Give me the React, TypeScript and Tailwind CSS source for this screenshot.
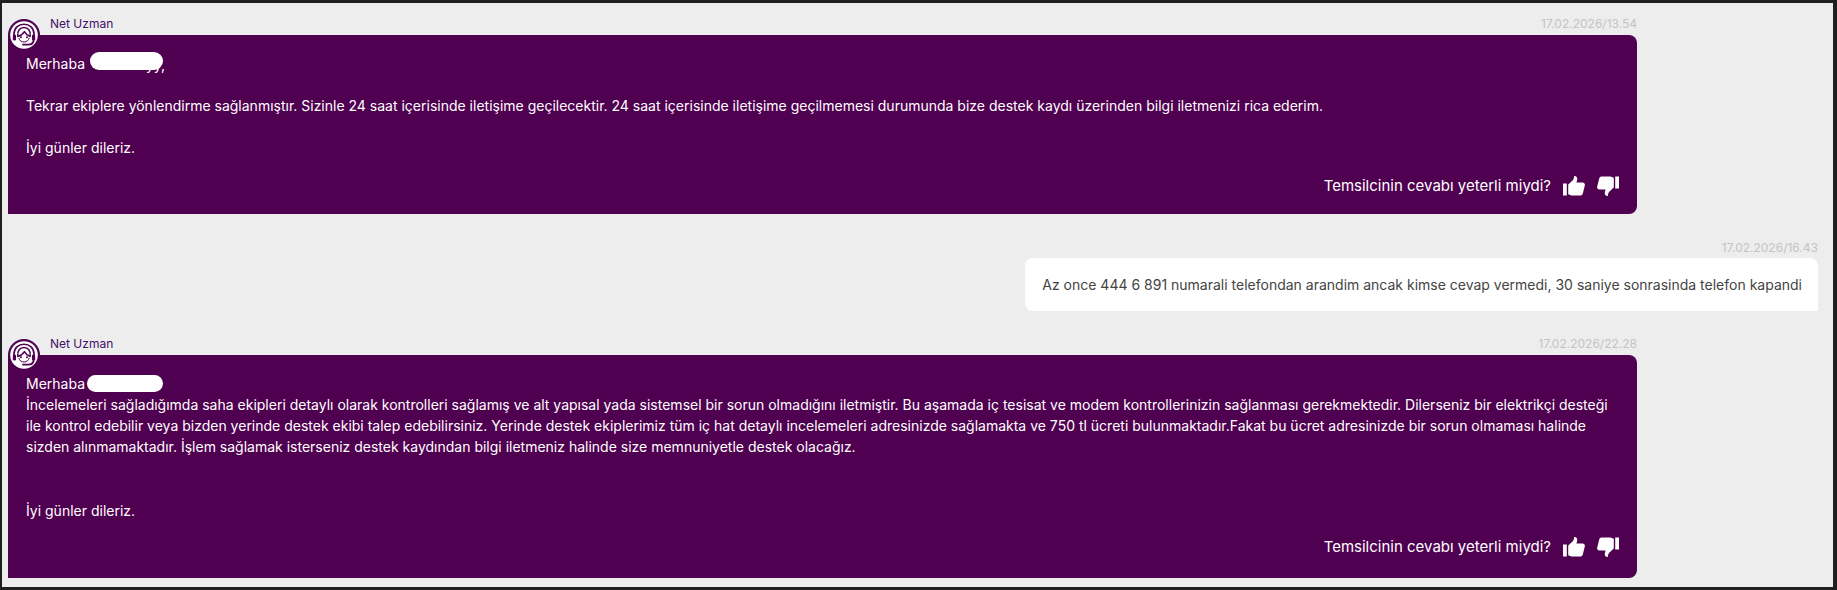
const INTER = "font-['Inter','Liberation_Sans',sans-serif]";

function Avatar() {
  return (
    <div className="absolute left-0 top-[1px] w-8 h-8">
      <svg viewBox="0 0 32 32" className="w-8 h-8">
        <circle cx="16" cy="16" r="16" fill="#4f0050" />
        <circle cx="16" cy="16" r="13.8" fill="#fff" />
        <path d="M6 20 V15 C6 9 10.5 5.2 16 5.2 C21.5 5.2 26 9 26 15 V20" fill="none" stroke="#4f0050" strokeWidth="1.6" />
        <path d="M9.8 17.5 C9 11.5 12 8.5 16 8.5 C20 8.5 23 11.5 22.2 17.5 C19.8 16.5 17.6 15 16.4 12.6 C15 15 12.4 16.8 9.8 17.5 Z" fill="none" stroke="#4f0050" strokeWidth="1.5" strokeLinejoin="round" />
        <path d="M10.8 19 C11.6 21.6 13.4 23 16 23 C18.6 23 20.4 21.6 21.2 19" fill="none" stroke="#4f0050" strokeWidth="1" />
        <circle cx="13" cy="18.2" r="1" fill="#4f0050" />
        <circle cx="19" cy="18.2" r="1" fill="#4f0050" />
        <rect x="4.8" y="15.5" width="3.2" height="6" rx="1.3" fill="#4f0050" />
        <rect x="24" y="15.5" width="3.2" height="6" rx="1.3" fill="#4f0050" />
        <path d="M25.6 21 C25.6 24.2 23 25.6 20 25.6 H15" fill="none" stroke="#4f0050" strokeWidth="1.8" strokeLinecap="round" />
      </svg>
    </div>
  );
}

function Thumb({ className }: { className?: string }) {
  return (
    <svg viewBox="0 0 22 20" className={`w-[22px] h-5 ${className ?? ""}`} fill="#fff">
      <rect x="0" y="7.5" width="3.8" height="12" />
      <path d="M5.2 8.5 L9.8 4.2 C10.8 3 11 1.5 11.2 0 C13.6 -0.2 14.8 2 14 4.5 L13.4 6.5 H19.6 C21.4 6.5 22.2 8 21.8 9.5 L19.8 17.6 C19.4 19 18.4 19.6 17 19.6 H8.5 L5.2 18.2 Z" />
    </svg>
  );
}

function Blob({ className }: { className: string }) {
  return <div className={`absolute bg-white rounded-full ${className}`} />;
}

function Feedback() {
  return (
    <div className="flex items-center justify-end gap-3 text-[15px] leading-5 text-white pr-[18px]">
      <span>Temsilcinin cevabı yeterli miydi?</span>
      <div className="flex items-center gap-3">
        <Thumb />
        <Thumb className="rotate-180" />
      </div>
    </div>
  );
}

function AgentMessage({ time, children }: { time: string; children: React.ReactNode }) {
  return (
    <div className="relative w-[1629px] ml-[6px]">
      <Avatar />
      <div className="flex justify-between h-[17px] pl-[42px] text-[12px] leading-[12px]">
        <span className="text-[#431067]">Net Uzman</span>
        <span className="text-[#c4c4c4]">{time}</span>
      </div>
      <div className="bg-[#4f0050] rounded-r-lg text-white text-[14px] leading-[21px] pl-[18px] pt-[18px] pb-[18px]">
        {children}
      </div>
    </div>
  );
}

export default function App() {
  return (
    <div className={`w-[1837px] h-[590px] overflow-hidden bg-[#ededed] border-[#1f1f1f] border-t-[3px] border-l-[2px] border-b-[3px] border-r-[4px] pt-[15px] ${INTER}`}>
      <AgentMessage time="17.02.2026/13.54">
        <div className="relative">
          <p>Merhaba</p>
          <span className="absolute left-[120px] top-[1px]">yy,</span>
          <Blob className="left-[64px] -top-[1px] w-[73px] h-[18px]" />
          <p className="mt-[21px]">Tekrar ekiplere yönlendirme sağlanmıştır. Sizinle 24 saat içerisinde iletişime geçilecektir. 24 saat içerisinde iletişime geçilmemesi durumunda bize destek kaydı üzerinden bilgi iletmenizi rica ederim.</p>
          <p className="mt-[21px]">İyi günler dileriz.</p>
        </div>
        <div className="mt-[18px]"><Feedback /></div>
      </AgentMessage>

      <div className="flex flex-col items-end w-[1816px] mt-[25px]">
        <span className="text-[12px] leading-[17px] text-[#c4c4c4]">17.02.2026/16.43</span>
        <div className="bg-white rounded-t-lg rounded-bl-lg text-[14px] leading-[21px] text-[#444444] pl-[17px] pr-4 py-4 mt-[2px]">
          Az once 444 6 891 numarali telefondan arandim ancak kimse cevap vermedi, 30 saniye sonrasinda telefon kapandi
        </div>
      </div>

      <div className="mt-[27px]">
        <AgentMessage time="17.02.2026/22.28">
          <div className="relative w-[1590px]">
            <p>Merhaba</p>
            <Blob className="left-[61px] top-[2px] w-[76px] h-[17px]" />
            <p>İncelemeleri sağladığımda saha ekipleri detaylı olarak kontrolleri sağlamış ve alt yapısal yada sistemsel bir sorun olmadığını iletmiştir. Bu aşamada iç tesisat ve modem kontrollerinizin sağlanması gerekmektedir. Dilerseniz bir elektrikçi desteği ile kontrol edebilir veya bizden yerinde destek ekibi talep edebilirsiniz. Yerinde destek ekiplerimiz tüm iç hat detaylı incelemeleri adresinizde sağlamakta ve 750 tl ücreti bulunmaktadır.Fakat bu ücret adresinizde bir sorun olmaması halinde sizden alınmamaktadır. İşlem sağlamak isterseniz destek kaydından bilgi iletmeniz halinde size memnuniyetle destek olacağız.</p>
            <p className="mt-[43px]">İyi günler dileriz.</p>
          </div>
          <div className="mt-[16px] mb-[3px]"><Feedback /></div>
        </AgentMessage>
      </div>
    </div>
  );
}
